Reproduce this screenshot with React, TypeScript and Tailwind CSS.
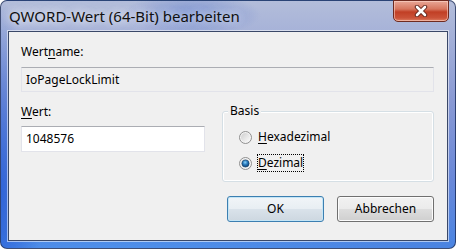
import type { ReactNode } from 'react';

function Radio({ checked }: { checked?: boolean }) {
  return (
    <svg width="13" height="13" viewBox="0 0 13 13" className="shrink-0">
      <defs>
        <linearGradient id={checked ? 'rgA' : 'rgB'} x1="0" y1="0" x2="1" y2="1">
          <stop offset="0" stopColor="#cfcfcf" />
          <stop offset="1" stopColor="#fbfbfb" />
        </linearGradient>
        <radialGradient id="dot" cx="0.45" cy="0.35" r="0.7">
          <stop offset="0" stopColor="#8ad2f8" />
          <stop offset="0.45" stopColor="#2a7bbd" />
          <stop offset="1" stopColor="#0b3a6a" />
        </radialGradient>
      </defs>
      <circle cx="6.5" cy="6.5" r="6" fill="#f4f4f4" stroke="#8f8f8f" strokeWidth="1" />
      <circle cx="6.5" cy="6.5" r="4.5" fill={`url(#${checked ? 'rgA' : 'rgB'})`} />
      {checked && <circle cx="6.5" cy="6.5" r="3.6" fill="url(#dot)" stroke="#0f3c66" strokeWidth="0.6" />}
    </svg>
  );
}

function Btn({ children, primary }: { children: ReactNode; primary?: boolean }) {
  return (
    <div
      className={
        'flex h-[26px] w-[97px] items-center justify-center rounded-[3px] border ' +
        (primary
          ? 'border-[#3c7fb1] bg-[linear-gradient(to_bottom,#f1f5f8_0%,#e8eef3_48%,#d9e2ea_52%,#cdd7e0_100%)] shadow-[inset_0_0_0_1px_#c4e5f6]'
          : 'border-[#707070] bg-[linear-gradient(to_bottom,#f2f2f2_0%,#ebebeb_48%,#dddddd_52%,#cfcfcf_100%)] shadow-[inset_0_0_0_1px_#fcfcfc]')
      }
    >
      {children}
    </div>
  );
}

export default function App() {
  return (
    <div className="h-[249px] w-[456px] overflow-hidden font-['Noto_Sans',sans-serif] text-[12px] leading-[16px] text-black">
      <div className="relative flex h-full w-full flex-col rounded-[7px] border border-[#22325a]/80 bg-[radial-gradient(ellipse_70px_22px_at_190px_14px,rgba(70,105,200,0.55),transparent),radial-gradient(ellipse_40px_190px_at_0px_190px,rgba(40,95,215,0.85),transparent),radial-gradient(ellipse_300px_20px_at_120px_249px,rgba(80,150,240,0.7),transparent),linear-gradient(to_bottom,#b3bdda_0%,#a5b1d8_14%,#8a9ad4_40%,#6a88d8_72%,#4a84e2_100%)]">
        {/* title bar */}
        <div className="flex h-[30px] items-center pl-[8px]">
          <span className="text-[15px] leading-[20px] text-[#101010] [text-shadow:0_0_8px_rgba(255,255,255,0.95),0_0_14px_rgba(235,240,250,0.9)]">
            QWORD-Wert (64-Bit) bearbeiten
          </span>
        </div>

        {/* close button */}
        <div className="absolute right-[6px] top-[-1px] flex h-[22px] w-[56px] items-center justify-center rounded-b-[5px] border border-[#6e2a20] bg-[linear-gradient(to_bottom,#e9a797_0%,#d7765f_40%,#c13f25_55%,#cb5339_85%,#de8064_100%)] shadow-[inset_0_0_0_1px_rgba(255,220,210,0.55)]">
          <svg width="14" height="12" viewBox="0 0 14 12">
            <path d="M3 2 L11 10 M11 2 L3 10" stroke="#5a2018" strokeWidth="4.4" strokeLinecap="round" />
            <path d="M3 2 L11 10 M11 2 L3 10" stroke="#ffffff" strokeWidth="2.6" strokeLinecap="round" />
          </svg>
        </div>

        {/* client area */}
        <div className="mx-[7px] mb-[7px] flex flex-1 flex-col border border-[#3a4868] bg-[#f0f0f0] pl-[12px] pr-[13px] pt-[12px] shadow-[0_0_0_1px_rgba(255,255,255,0.55)]">
          <div>
            Wert<span className="underline underline-offset-2">n</span>ame:
          </div>
          <div className="mt-[7px] flex h-[25px] items-center border border-[#e2e3ea] border-t-[#abadb3] bg-[#f0f0f0] pl-[4px]">
            IoPageLockLimit
          </div>

          <div className="flex">
            <div className="flex w-[184px] flex-col">
              <div className="mt-[12px]">
                <span className="underline underline-offset-2">W</span>ert:
              </div>
              <div className="mt-[6px] flex h-[26px] items-center border border-[#e2e3ea] border-t-[#abadb3] bg-white pl-[4px]">
                1048576
              </div>
            </div>

            <div className="relative ml-auto mt-[19px] h-[71px] w-[212px] rounded-[3px] border border-[#d5dfe5] pl-[16px] pt-[16px] shadow-[inset_0_0_0_1px_#ffffff]">
              <span className="absolute left-[5px] top-[-9px] bg-[#f0f0f0] px-[2px]">Basis</span>
              <div className="flex h-[18px] items-center gap-[5px]">
                <Radio />
                <span className="border border-transparent">
                  <span className="underline underline-offset-2">H</span>exadezimal
                </span>
              </div>
              <div className="mt-[8px] flex h-[18px] items-center gap-[5px]">
                <Radio checked />
                <span className="border border-dotted border-black">
                  <span className="underline underline-offset-2">D</span>ezimal
                </span>
              </div>
            </div>
          </div>

          <div className="mt-[14px] flex justify-end gap-[13px]">
            <Btn primary>OK</Btn>
            <Btn>Abbrechen</Btn>
          </div>
        </div>
      </div>
    </div>
  );
}
